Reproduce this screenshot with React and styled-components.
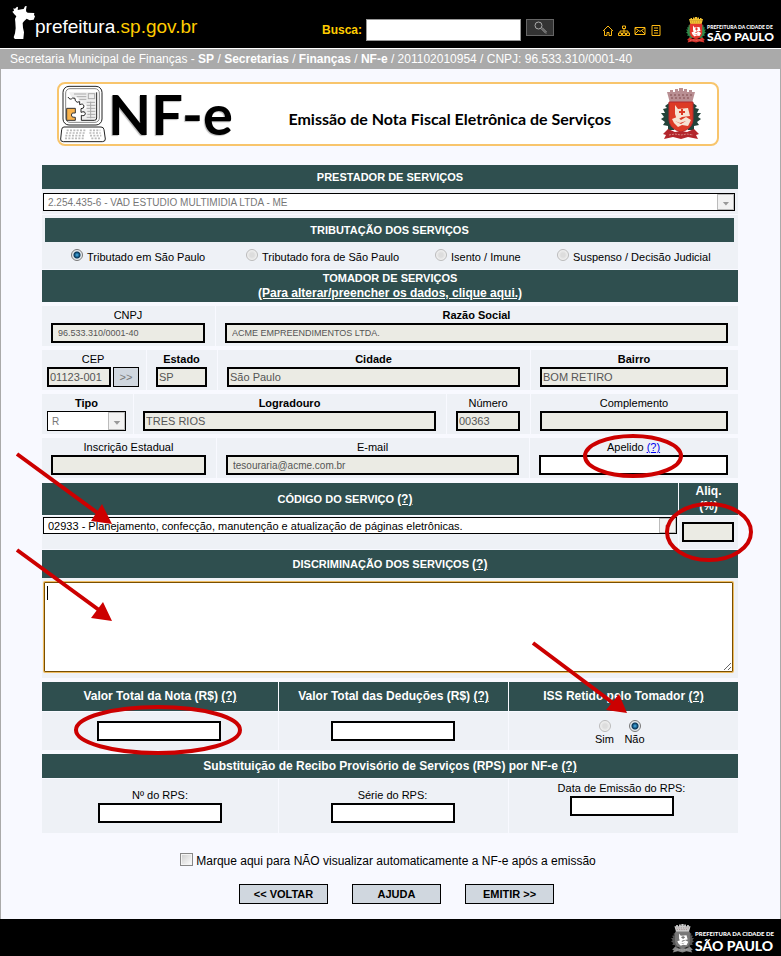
import React from "react";
import styled, { createGlobalStyle, css } from "styled-components";

const GlobalStyle = createGlobalStyle`
  * { box-sizing: border-box; }
  body {
    margin: 0;
    background: #f8f9ff;
    color: #000;
    font: 11px/16px "Liberation Sans", Arial, sans-serif;
  }
  input, select, textarea, button { font-family: inherit; margin: 0; border-radius: 0; }
`;

const Page = styled.div`
  position: relative;
  overflow: hidden;
`;

/* ---------- top bar ---------- */
const TopBar = styled.header`
  display: flex;
  align-items: center;
  min-height: 48px;
  padding: 0 7px 0 12px;
  background: #000;
`;

const Brand = styled.a`
  display: flex;
  align-items: flex-start;
  flex: 1;
  padding-bottom: 8px;
  color: #fff;
  font-size: 19px;
  line-height: 22px;
  text-decoration: none;
  svg { flex: none; }
`;

const BrandName = styled.span`
  padding-top: 15px;
  b { font-weight: 400; color: #fc0; }
`;

const SearchForm = styled.form`
  display: flex;
  align-items: center;
  gap: 4px;
  padding-top: 12px;
  label { color: #fc0; font-size: 12px; font-weight: 700; }
`;

const SearchInput = styled.input`
  width: 155px;
  height: 22px;
  padding: 0 4px;
  border: 1px solid #999;
  background: #fff;
`;

const SearchButton = styled.button`
  display: grid;
  place-items: center;
  align-self: flex-start;
  width: 28px;
  height: 17px;
  padding: 0;
  margin-left: 1px;
  border: 1px solid #666;
  background: #333;
`;

const QuickLinks = styled.nav`
  display: flex;
  gap: 4px;
  margin: 12px 24px 0 48px;
  a { display: block; height: 11px; }
  svg { display: block; }
`;

const CityLogo = styled.a`
  display: flex;
  align-items: flex-end;
  gap: 1px;
  color: #fff;
  text-decoration: none;
  padding-top: ${(p) => (p.$large ? "0" : "11px")};
`;

const CityText = styled.span`
  display: flex;
  flex-direction: column;
  font-family: Lato, "Liberation Sans", sans-serif;
  font-weight: 900;
  white-space: nowrap;
  small { font-size: ${(p) => (p.$large ? "6px" : "5px")}; line-height: 8px; }
  strong {
    font-size: ${(p) => (p.$large ? "14px" : "12px")};
    font-weight: 900;
    line-height: ${(p) => (p.$large ? "15px" : "12px")};
  }
`;

const Breadcrumb = styled.nav`
  padding: 0 10px;
  border-top: 1px solid #fff;
  background: #aaa;
  color: #fff;
  font-size: 12px;
  line-height: 20px;
  a { color: #fff; font-weight: 700; text-decoration: none; }
`;

/* ---------- page body ---------- */
const Main = styled.main`
  padding: 13px 42px 15px 41px;
  border: solid #aaa;
  border-width: 0 1px;
`;

const Banner = styled.section`
  display: flex;
  align-items: center;
  height: 64px;
  margin: 0 19px 19px 15px;
  padding: 0 16px 0 1px;
  border: 2px solid #f8c56c;
  border-radius: 8px;
  background: #fff;
  svg { flex: none; }
`;

const BannerMark = styled.span`
  flex: 1;
  padding-left: 2px;
  font: 700 56px/58px Lato, "Liberation Sans", sans-serif;
  text-shadow: -1px 1px 1px #bbb;
  white-space: nowrap;
`;

const BannerTitle = styled.h1`
  margin: 0;
  padding: 10px 50px 0 0;
  font: 700 16px/24px Lato, "Liberation Sans", sans-serif;
  white-space: nowrap;
`;

const Title = styled.h2`
  display: flex;
  flex-direction: column;
  align-items: center;
  justify-content: center;
  min-height: ${(p) => p.$h || 24}px;
  margin: 0;
  padding-right: ${(p) => (p.$shift ? "30px" : "0")};
  background: #2f4f4f;
  color: #fff;
  font-size: ${(p) => (p.$caps ? "11px" : "12px")};
  font-weight: 700;
  line-height: 15px;
  text-align: center;
  a { color: #fff; font-size: 12px; }
`;

const Panel = styled.div`
  margin-bottom: ${(p) => p.$after || 0}px;
  padding: ${(p) => p.$pad || "0"};
  background: #eef1f6;
`;

const Row = styled.div`
  display: grid;
  grid-template-columns: ${(p) => p.$cols};
  column-gap: 1px;
  margin-bottom: ${(p) => (p.$after === undefined ? 4 : p.$after)}px;
`;

const Cell = styled.div`
  min-width: 0;
  min-height: 40px;
  padding: ${(p) => (p.$tight ? "1px 7px 3px 5px" : "1px 10px 3px 9px")};
  background: #eef1f6;
  text-align: center;
`;

const Label = styled.label`
  display: block;
  font-weight: ${(p) => (p.$bold ? 700 : 400)};
`;

const LabelLine = styled.div`
  display: flex;
  justify-content: center;
  gap: 3px;
  a { color: #00e; }
`;

const TextInput = styled.input`
  display: block;
  width: ${(p) => p.$w || "100%"};
  min-width: 0;
  height: 20px;
  padding: 0 ${(p) => (p.$inset ? 5 : 1)}px;
  border: 2px solid #000;
  background: ${(p) => (p.readOnly ? "#ebebe4" : "#fff")};
  color: #555;
  font-size: ${(p) => p.$size || 11}px;
`;

const Inline = styled.div`
  display: flex;
  gap: 2px;
`;

const Button = styled.button`
  flex: none;
  width: ${(p) => (p.$small ? 26 : 89)}px;
  height: 20px;
  padding: 0;
  border: 1px solid #000;
  background: #d0d7df;
  color: ${(p) => (p.$small ? "#777" : "#000")};
  font-size: 11px;
  font-weight: ${(p) => (p.$small ? 400 : 700)};
`;

const SelectFrame = styled.div`
  display: grid;
  height: ${(p) => p.$h || 18}px;
  border: 1px solid #000;
  background: #fff;
  > * { grid-area: 1 / 1; }
  svg {
    justify-self: end;
    width: 17px;
    height: 100%;
    border: 1px solid #bbb;
    background: #f2f2f2;
    pointer-events: none;
  }
  select {
    width: 100%;
    min-width: 0;
    padding: 0 20px 0 4px;
    border: 0;
    appearance: none;
    background: none;
    color: ${(p) => (p.$active ? "#000" : "#777")};
    font-size: ${(p) => (p.$active ? "11px" : "10px")};
    opacity: 1;
  }
`;

const round = css`
  appearance: none;
  flex: none;
  width: 12px;
  height: 12px;
  border: 1px solid #bbb;
  border-radius: 50%;
  background: radial-gradient(circle, #ddd 30%, #f4f4f4 75%);
  &:checked {
    border-color: #777;
    background: radial-gradient(circle at 50% 50%, #4fb5e8 0, #175e8d 2px, #0b3555 3px, #dde4ea 4px, #fff 6px);
  }
`;

const Radio = styled.input.attrs({ type: "radio" })`
  ${round}
`;

const Options = styled.div`
  display: grid;
  grid-template-columns: 175fr 189fr 122fr 177fr;
  padding: 6px 0 4px 26px;
`;

const Option = styled.label`
  display: flex;
  gap: 4px;
  line-height: 16px;
  white-space: nowrap;
  padding-top: 1px;
`;

const StackedOption = styled.label`
  display: flex;
  flex-direction: column;
  align-items: center;
  min-width: 30px;
  line-height: 14px;
`;

const RadioPair = styled.div`
  display: flex;
  justify-content: center;
  padding: 8px 8px 0 0;
`;

const Value = styled.div`
  display: flex;
  flex-direction: column;
  align-items: center;
  min-height: ${(p) => p.$h}px;
  padding: ${(p) => p.$pad || "9px 2px 9px 0"};
  background: #eef1f6;
`;

const Description = styled.textarea`
  display: block;
  width: 100%;
  height: 90px;
  margin: 1px 0;
  padding: 2px;
  border: 1px solid #7a4f00;
  border-radius: 1px;
  outline: none;
  box-shadow: 0 0 0 1px #efbd62;
  background: linear-gradient(#000, #000) 2px 3px / 1px 14px no-repeat #fff;
  font-size: 11px;
`;

const Preference = styled.label`
  display: flex;
  align-items: center;
  justify-content: center;
  gap: 3px;
  padding: 19px 4px 14px 0;
  font-size: 12px;
  line-height: 18px;
  input {
    appearance: none;
    width: 13px;
    height: 13px;
    margin-bottom: 3px;
    border: 1px solid #888;
    background: linear-gradient(135deg, #ccc, #fff);
    box-shadow: inset 0 0 0 1px #f4f4f4;
  }
`;

const Actions = styled.div`
  display: flex;
  justify-content: center;
  gap: 24px;
  padding-left: 13px;
`;

const Footer = styled.footer`
  display: flex;
  justify-content: flex-end;
  min-height: 37px;
  padding: 5px 7px 3px;
  background: #000;
`;

const Annotations = styled.svg`
  position: absolute;
  top: 0;
  left: 0;
  pointer-events: none;
`;

/* ---------- drawings ---------- */
function StatueIcon() {
  return (
    <svg width="23" height="38" viewBox="36 0 69 114" aria-hidden="true">
      <path fill="#fff" d="M40 22l5 1 6-6 3 2-1 8 12-2 6-1 4-8 5-1-2 12 1 5 4 3 20 1-1 6 3 4-4 10-12 2-9-5-8 8-4 5 1 14 3 14-2 20-4 3-8-1-8 1-5-2-4-6 4-12 2-15-1-18-1-10 4-8-6-6-6-8 5-3z" />
    </svg>
  );
}

function Crest({ w, h, crown, shield, leaf, ribbon, detail = "#fff" }) {
  return (
    <svg width={w} height={h} viewBox="0 0 40 52" preserveAspectRatio="none" aria-hidden="true">
      <g fill={leaf}>
        <path d="M8 15l-4 3 2 2-4 1 2 4-4 0 3 4-3 2 4 3-2 3 5 1 0 4 6 0 3-9-6-12z" />
        <path d="M32 15l4 3-2 2 4 1-2 4 4 0-3 4 3 2-4 3 2 3-5 1 0 4-6 0-3-9 6-12z" />
      </g>
      <path fill={ribbon} d="M2 46l5-5 7 3 6-1 6 1 7-3 5 5-3 1 2 4-10-2-7 2-8-2-9 2 2-4z" />
      <path fill={crown} d="M6 4h3V2h3v2h2V1h3v2h1V0h4v3h1V1h3v3h2V2h3v2h3l-3 11H9z" />
      <path stroke="#5a2020" strokeWidth="1" strokeDasharray="2 2" d="M9 7h22M10 10h20" fill="none" opacity=".6" />
      <path fill={shield} d="M8 14h24v17c0 7-5 11-12 13C13 42 8 38 8 31z" stroke={ribbon} />
      <path fill={detail} d="M14 17l3 4 10-1 2 8-8 1-5 3-2-6zM11 31l5-2 4 3 5-3 5 3-3 6-6-1-4 2-4-4z" />
      <path fill={shield} d="M20 21h2v2h2v2h-2v2h-2v-2h-2v-2h2zM14 33l5 2 6-2-5 3z" />
      <path stroke={detail} strokeWidth="1" strokeDasharray="2 1" d="M8 47l6-1 6 1 6-1 6 1" fill="none" opacity=".5" />
    </svg>
  );
}

function ComputerIcon() {
  return (
    <svg width="46" height="58" viewBox="0 0 138 174" aria-hidden="true">
      <g fill="none" stroke="#222" strokeWidth="3">
        <rect x="9" y="4" width="117" height="116" rx="18" fill="#fff" />
        <rect x="17" y="11" width="101" height="101" rx="13" stroke="#888" />
        <path d="M12 126h111q8 0 9 8l4 28q0 8-9 8H10q-9 0-8-8l3-28q1-8 7-8z" fill="#fff" />
      </g>
      <path d="M27 22h83v77q0 7-7 7H65V94q10 3 12-4 0-8-10-5V72q14 2 13-9-3-8-13-5V48q-8 4-12-2 1-10-8-9-8 6-13-2z" fill="#eee" />
      <path d="M24 36q6 11 14 3 10-2 8 8 4 8 13 3v9q10-5 13 4 1 8-9 8v11q12-5 13 4-2 9-12 5v15h39q7 0 7-7V22" fill="none" stroke="#222" strokeWidth="3" />
      <g stroke="#aaa" strokeWidth="3" fill="none">
        <path d="M42 27h37M50 35h29M58 43h21M80 52h25M80 61h26M80 70h26M82 79h24M82 88h24M80 97h26M92 50v50" />
        <rect x="85" y="26" width="19" height="15" />
      </g>
      <path d="M20 70h26v14q-12-3-12 6t12 7v9H20z" fill="#f8b24c" stroke="#333" strokeWidth="3" />
      <g stroke="#bbb" strokeWidth="5" strokeDasharray="6 4">
        <path d="M20 136h56M18 144h58M16 152h60M15 160h56M89 136h32M88 144h34M90 152h34M94 160h30" />
      </g>
    </svg>
  );
}

const QUICK = [
  ["Página inicial", "M1 6l5-5 5 5M2.500 5.500v5h2.500v-3h2v3h2.500v-5"],
  ["Mapa do site", "M4.500 1h3v2.500h-3zM6 4v2M2 8V6h8v2M.5 8h3v2.500h-3zM4.500 8h3v2.500h-3zM8.500 8h3v2.500h-3zM6 6v2"],
  ["Contato", "M1 2.500h10v7H1zM1 3l5 3.500L11 3M1 9l3-3M11 9L8 6"],
  ["Notícias", "M2 .5h8v10H2zM4 3h4M4 5.500h4M4 8h4"],
];

function Arrow() {
  return (
    <svg viewBox="0 0 16 16" aria-hidden="true">
      <path d="M5 8h7l-3.500 4z" fill="#999" />
    </svg>
  );
}

function SelectBox({ h, active, disabled, children, ...rest }) {
  return (
    <SelectFrame $h={h} $active={active}>
      <select disabled={disabled} {...rest}>{children}</select>
      <Arrow />
    </SelectFrame>
  );
}

function Field({ id, label, bold, tight, help, after, ...input }) {
  return (
    <Cell $tight={tight}>
      <LabelLine>
        <Label htmlFor={id} $bold={bold}>{label}</Label>
        {help && <Help />}
      </LabelLine>
      <Inline>
        <TextInput id={id} {...input} />
        {after}
      </Inline>
    </Cell>
  );
}

const Help = () => <a href="#ajuda">(?)</a>;

function City({ large }) {
  const colours = large
    ? { w: 23, h: 29, crown: "#ccc", shield: "#777", leaf: "#555", ribbon: "#888" }
    : { w: 20, h: 26, crown: "#f2c230", shield: "#e5352b", leaf: "#2d8a4b", ribbon: "#d8342c" };
  return (
    <CityLogo href="#cidade" $large={large}>
      <Crest {...colours} />
      <CityText $large={large}>
        <small>PREFEITURA DA CIDADE DE</small>
        <strong>SÃO PAULO</strong>
      </CityText>
    </CityLogo>
  );
}

export default function App() {
  return (
    <Page>
      <GlobalStyle />
      <TopBar>
        <Brand href="#inicio">
          <StatueIcon />
          <BrandName>prefeitura<b>.sp.gov.br</b></BrandName>
        </Brand>
        <SearchForm onSubmit={(e) => e.preventDefault()}>
          <label htmlFor="busca">Busca:</label>
          <SearchInput id="busca" />
          <SearchButton aria-label="Buscar">
            <svg width="13" height="13" viewBox="0 0 13 13" fill="none" stroke="#aaa">
              <circle cx="4.500" cy="4.500" r="3.500" />
              <path d="M7 7.500l4.500 4.500M8 6.500l4.500 4.500M12 12.500l1-1" />
            </svg>
          </SearchButton>
        </SearchForm>
        <QuickLinks>
          {QUICK.map(([name, d]) => (
            <a key={name} href="#atalho" aria-label={name}>
              <svg width="12" height="11" viewBox="0 0 12 11" fill="none" stroke="#fdb913"><path d={d} /></svg>
            </a>
          ))}
        </QuickLinks>
        <City />
      </TopBar>
      <Breadcrumb>
        Secretaria Municipal de Finanças - <a href="#sp">SP</a> / <a href="#secretarias">Secretarias</a> / <a href="#financas">Finanças</a> / <a href="#nfe">NF-e</a> / 201102010954 / CNPJ: 96.533.310/0001-40
      </Breadcrumb>

      <Main>
        <Banner>
          <ComputerIcon />
          <BannerMark>NF-e</BannerMark>
          <BannerTitle>Emissão de Nota Fiscal Eletrônica de Serviços</BannerTitle>
          <Crest w={40} h={52} crown="#b98f93" shield="#dc3a26" leaf="#23433a" ribbon="#b3262c" detail="#f6e3d3" />
        </Banner>

        <form onSubmit={(e) => e.preventDefault()}>
          <Title $caps>PRESTADOR DE SERVIÇOS</Title>
          <Panel $pad="4px 3px 3px 1px" $after={1}>
            <SelectBox disabled aria-label="Prestador de serviços">
              <option>2.254.435-6 - VAD ESTUDIO MULTIMIDIA LTDA - ME</option>
            </SelectBox>
          </Panel>
          <Panel $pad="3px 4px 0 3px" $after={1}>
            <Title $caps>TRIBUTAÇÃO DOS SERVIÇOS</Title>
            <Options>
              {["Tributado em São Paulo", "Tributado fora de São Paulo", "Isento / Imune", "Suspenso / Decisão Judicial"].map((t, i) => (
                <Option key={t}><Radio name="tributacao" defaultChecked={i === 0} />{t}</Option>
              ))}
            </Options>
          </Panel>

          <Title $caps $h={32}>
            <span>TOMADOR DE SERVIÇOS</span>
            <a href="#alterar">(Para alterar/preencher os dados, clique aqui.)</a>
          </Title>
          <Panel $after={4} />
          <Row $cols="173fr 522fr">
            <Field id="cnpj" label="CNPJ" $inset $size={9} readOnly defaultValue="96.533.310/0001-40" />
            <Field id="razao" label="Razão Social" bold $inset $size={9} readOnly defaultValue="ACME EMPREENDIMENTOS LTDA." />
          </Row>
          <Row $cols="104fr 70fr 312fr 207fr">
            <Field id="cep" label="CEP" tight readOnly defaultValue="01123-001" after={<Button type="button" $small>&gt;&gt;</Button>} />
            <Field id="estado" label="Estado" bold readOnly defaultValue="SP" />
            <Field id="cidade" label="Cidade" bold readOnly defaultValue="São Paulo" />
            <Field id="bairro" label="Bairro" bold readOnly defaultValue="BOM RETIRO" />
          </Row>
          <Row $cols="91fr 312fr 83fr 207fr">
            <Cell $tight>
              <Label htmlFor="tipo" $bold>Tipo</Label>
              <SelectBox id="tipo" h={20} disabled><option>R</option></SelectBox>
            </Cell>
            <Field id="logradouro" label="Logradouro" bold readOnly defaultValue="TRES RIOS" />
            <Field id="numero" label="Número" readOnly defaultValue="00363" />
            <Field id="complemento" label="Complemento" readOnly />
          </Row>
          <Row $cols="174fr 312fr 208fr" $after={5}>
            <Field id="inscricao" label="Inscrição Estadual" readOnly />
            <Field id="email" label="E-mail" $inset $size={10} readOnly defaultValue="tesouraria@acme.com.br" />
            <Field id="apelido" label="Apelido" help />
          </Row>

          <Row $cols="636fr 59fr" $after={1}>
            <Title $caps $h={32} $shift><span>CÓDIGO DO SERVIÇO <Help /></span></Title>
            <Title $h={32}><span>Aliq.</span><span>(%)</span></Title>
          </Row>
          <Row $cols="636fr 59fr" $after={1}>
            <Panel $pad="1px 1px 15px">
              <SelectBox h={17} active aria-label="Código do serviço">
                <option>02933 - Planejamento, confecção, manutenção e atualização de páginas eletrônicas.</option>
              </SelectBox>
            </Panel>
            <Panel $pad="6px 4px 0 3px"><TextInput aria-label="Alíquota" readOnly /></Panel>
          </Row>

          <Title $caps $h={28}><span>DISCRIMINAÇÃO DOS SERVIÇOS <Help /></span></Title>
          <Panel $pad="3px 5px 5px 2px" $after={4}>
            <Description aria-label="Discriminação dos serviços" />
          </Panel>

          <Row $cols="236fr 229fr 229fr" $after={1}>
            <Title $h={29}><span>Valor Total da Nota (R$) <Help /></span></Title>
            <Title $h={29}><span>Valor Total das Deduções (R$) <Help /></span></Title>
            <Title $h={29}><span>ISS Retido pelo Tomador <Help /></span></Title>
          </Row>
          <Row $cols="236fr 229fr 229fr">
            <Value $h={38}><TextInput $w="124px" aria-label="Valor total da nota" /></Value>
            <Value $h={38}><TextInput $w="124px" aria-label="Valor total das deduções" /></Value>
            <Value $h={38} $pad="0">
              <RadioPair>
                <StackedOption><Radio name="iss" />Sim</StackedOption>
                <StackedOption><Radio name="iss" defaultChecked />Não</StackedOption>
              </RadioPair>
            </Value>
          </Row>

          <Title $h={24}><span>Substituição de Recibo Provisório de Serviços (RPS) por NF-e <Help /></span></Title>
          <Panel $after={1} />
          <Row $cols="236fr 229fr 229fr" $after={0}>
            <Value $h={54} $pad="8px 0 0"><Label htmlFor="rps">Nº do RPS:</Label><TextInput id="rps" $w="124px" /></Value>
            <Value $h={54} $pad="8px 2px 0 0"><Label htmlFor="serie">Série do RPS:</Label><TextInput id="serie" $w="124px" /></Value>
            <Value $h={54} $pad="1px 4px 0 0"><Label htmlFor="data">Data de Emissão do RPS:</Label><TextInput id="data" $w="104px" /></Value>
          </Row>

          <Preference>
            <input type="checkbox" />
            Marque aqui para NÃO visualizar automaticamente a NF-e após a emissão
          </Preference>
          <Actions>
            <Button type="button">&lt;&lt; VOLTAR</Button>
            <Button type="button">AJUDA</Button>
            <Button type="submit">EMITIR &gt;&gt;</Button>
          </Actions>
        </form>
      </Main>
      <Footer><City large /></Footer>

      <Annotations width="781" height="956" viewBox="0 0 781 956" aria-hidden="true">
        <g fill="none" stroke="#c00" strokeWidth="4">
          <ellipse cx="633" cy="456" rx="48" ry="20" />
          <ellipse cx="709" cy="532" rx="42" ry="28" />
          <ellipse cx="158" cy="730" rx="82" ry="23" />
          <path d="M17 454l82 60M17 550l82 60M533 643l80 60" />
        </g>
        <path fill="#c00" d="M102 504l10 20-21-3zM103 602l9 19-21-3zM619 694l8 19-21-3z" />
      </Annotations>
    </Page>
  );
}
